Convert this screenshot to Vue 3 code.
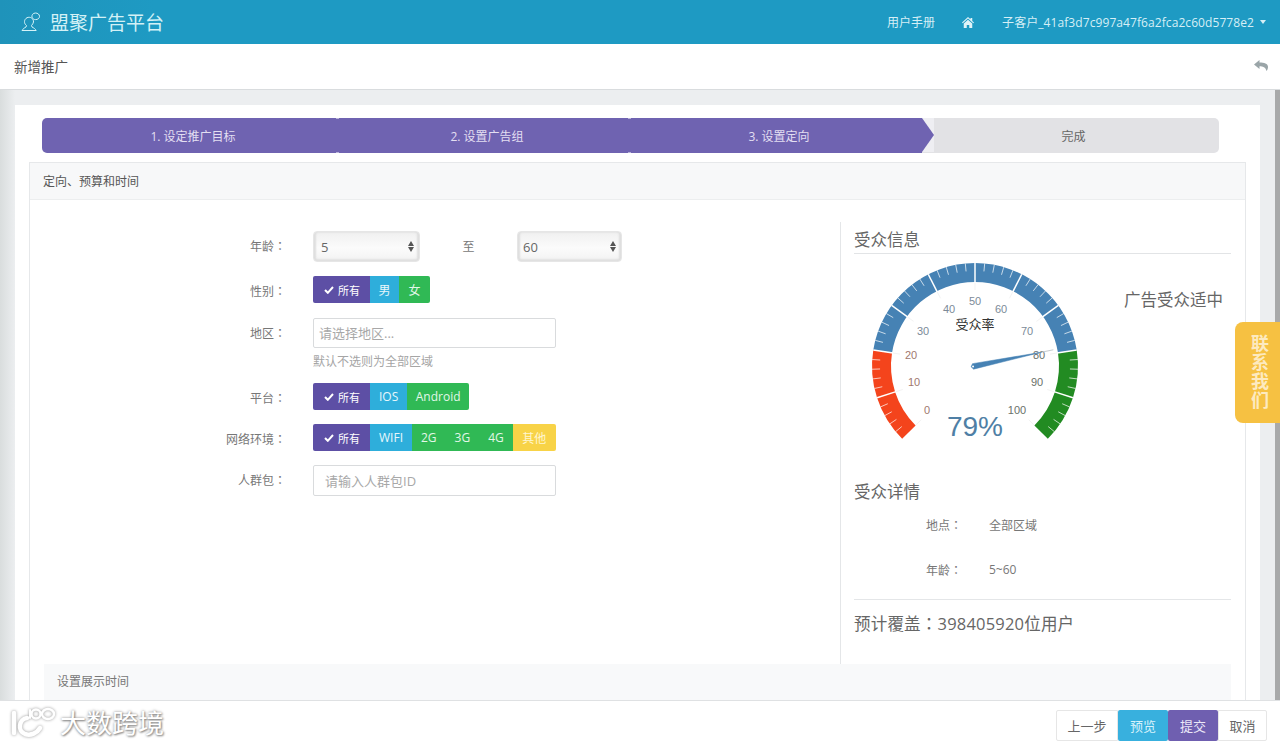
<template>
  <div class="page">
    <header class="topbar">
      <div class="brand">
        <svg class="brand-icon" width="20" height="20" viewBox="0 0 20 20" fill="none" stroke="#d5f3f8" stroke-width="1">
          <path d="M5.500 13.500A4.500 4.500 0 1 1 12.500 10Q12 12 10.500 13.500l.5 1.500c1.700.8 3.200 1.800 4.200 3.500H1c1-1.700 2.500-2.700 4-3.500z" />
          <path d="M11 5.500c-.6-2.400 1-4.500 3.500-4.500 2.300 0 4 1.500 4 3.300 0 2-1.700 3.300-3.900 3.300-.7 0-1.300-.1-1.800-.4z" />
        </svg>
        <span class="brand-name">盟聚广告平台</span>
      </div>
      <nav class="topnav">
        <a>用户手册</a>
        <svg class="home" width="12" height="11" viewBox="0 0 24 22" fill="#dff3f8">
          <path d="M12 0l5 4.600V2h3.500v5.800L24 11l-1.500 1.700L12 3.200 1.500 12.700 0 11z" />
          <path d="M12 5.500l8.500 7.700V22h-6v-6h-5v6h-6v-8.800z" />
        </svg>
        <a class="user">子客户_41af3d7c997a47f6a2fca2c60d5778e2<i class="caret"></i></a>
      </nav>
    </header>

    <div class="subbar">
      <span class="subbar-title">新增推广</span>
      <svg width="14" height="12" viewBox="0 0 28 24" fill="#9aa5a8">
        <path d="M11 0L0 9l11 9v-5.500c7 0 12 1.500 14 9.500 2.500-3 3-6 3-8.500C28 7 20 5 11 5z" />
      </svg>
    </div>

    <main class="main">
      <div class="content">
        <section class="card">
          <ol class="steps">
            <li v-for="s in steps" :key="s.text" class="step" :class="s.cls">{{ s.text }}</li>
          </ol>

          <div class="panel">
            <div class="panel-head">定向、预算和时间</div>
            <div class="panel-body">
              <div class="columns">
                <form class="form" @submit.prevent>
                  <div class="row">
                    <label>年龄<span class="colon">：</span></label>
                    <div class="select-wrap first">
                      <select><option>5</option></select>
                      <i class="updown"></i>
                    </div>
                    <span class="to">至</span>
                    <div class="select-wrap">
                      <select><option>60</option></select>
                      <i class="updown"></i>
                    </div>
                  </div>
                  <div class="row" v-for="g in groups" :key="g.label" :class="{ 'has-hint': g.hint }">
                    <label>{{ g.label }}<span class="colon">：</span></label>
                    <div v-if="g.items" class="btn-group">
                      <button class="opt all" type="button"><svg width="10" height="8" viewBox="0 0 10 8" fill="none" stroke="#fff" stroke-width="2"><path d="M1 4l2.800 2.800L9 1" /></svg>所有</button>
                      <button v-for="o in g.items" :key="o.t" class="opt" :class="o.c" type="button">{{ o.t }}</button>
                    </div>
                    <div v-else class="field">
                      <input :class="g.cls" :placeholder="g.placeholder" />
                      <p v-if="g.hint" class="hint">{{ g.hint }}</p>
                    </div>
                  </div>
                </form>

                <aside class="info">
                  <h3 class="info-title ruled">受众信息</h3>
                  <div class="gauge-row">
                    <svg class="gauge" width="270" height="210" viewBox="0 0 270 210">
                      <path v-for="b in bands" :key="b.color" :d="b.d" :fill="b.color" />
                      <line v-for="(t, i) in minorTicks" :key="'m' + i" v-bind="t" stroke="#fff" stroke-opacity=".7" stroke-width="1" />
                      <line v-for="(t, i) in majorTicks" :key="'j' + i" v-bind="t" stroke="#fff" stroke-width="1.500" />
                      <line v-for="(t, i) in innerTicks" :key="'n' + i" v-bind="t" stroke="#f3f3f3" stroke-width="1" />
                      <text v-for="l in labels" :key="l.t" :x="l.x" :y="l.y" :fill="l.c" class="g-label" text-anchor="middle">{{ l.t }}</text>
                      <text x="121" y="75" class="g-title" text-anchor="middle">受众率</text>
                      <line x1="121" y1="112" :x2="needle.x" :y2="needle.y" stroke="#c5ccd0" stroke-width="1" />
                      <polygon :points="needle.points" fill="#4682b4" stroke="#4682b4" stroke-width=".5" />
                      <circle :cx="needle.bx" :cy="needle.by" r="1" fill="#fff" />
                      <text x="121" y="182" class="g-value" text-anchor="middle">79%</text>
                    </svg>
                    <span class="verdict">广告受众适中</span>
                  </div>

                  <h3 class="info-title detail-title">受众详情</h3>
                  <div class="detail"><span class="detail-key">地点<span class="colon">：</span></span><span>全部区域</span></div>
                  <div class="detail"><span class="detail-key">年龄<span class="colon">：</span></span><span>5~60</span></div>
                  <p class="cover">预计覆盖<span class="colon">：</span>398405920位用户</p>
                </aside>
              </div>
              <div class="section-head">设置展示时间</div>
            </div>
          </div>
        </section>
      </div>
      <div class="scrollbar"></div>
    </main>

    <footer class="footer">
      <div class="actions">
        <button class="act" type="button">上一步</button>
        <button class="act blue" type="button">预览</button>
        <button class="act purple" type="button">提交</button>
        <button class="act" type="button">取消</button>
      </div>
    </footer>

    <div class="watermark">
      <svg width="48" height="34" viewBox="0 0 48 34" fill="none" stroke="#fff" stroke-width="4.500" stroke-linecap="round">
        <path d="M5 7v20" />
        <path d="M18 12c-8 1-10 13-2 16 6 2 12-1 15-6" />
        <path d="M21 4v8" stroke-width="2" />
        <circle cx="27" cy="8" r="4.500" stroke-width="2.500" />
        <ellipse cx="39" cy="8" rx="6" ry="5" stroke-width="2.500" />
      </svg>
      <span>大数跨境</span>
    </div>

    <a class="contact">联系我们</a>
  </div>
</template>

<script setup>
const steps = [
  { text: '1. 设定推广目标', cls: 's1' },
  { text: '2. 设置广告组', cls: 's2' },
  { text: '3. 设置定向', cls: 's3' },
  { text: '完成', cls: 's4' }
]

const groups = [
  { label: '性别', items: [{ t: '男', c: 'blue narrow' }, { t: '女', c: 'green wide' }] },
  { label: '地区', placeholder: '请选择地区...', hint: '默认不选则为全部区域', cls: 'area' },
  { label: '平台', items: [{ t: 'IOS', c: 'blue' }, { t: 'Android', c: 'green narrow' }] },
  {
    label: '网络环境',
    items: [
      { t: 'WIFI', c: 'blue' },
      { t: '2G', c: 'green' },
      { t: '3G', c: 'green' },
      { t: '4G', c: 'green' },
      { t: '其他', c: 'yellow' }
    ]
  },
  { label: '人群包', placeholder: '请输入人群包ID', cls: 'crowd' }
]

// gauge geometry, value 0..100 sweeps 270deg
const cx = 121
const cy = 112
const R = 103
const r = 84

function pt(value, radius) {
  const a = ((-135 + value * 2.7) * Math.PI) / 180
  return [+(cx + radius * Math.sin(a)).toFixed(2), +(cy - radius * Math.cos(a)).toFixed(2)]
}

function band(from, to, color) {
  const [x1, y1] = pt(from, R)
  const [x2, y2] = pt(to, R)
  const [x3, y3] = pt(to, r)
  const [x4, y4] = pt(from, r)
  return {
    color,
    d: `M${x1} ${y1}A${R} ${R} 0 ${to - from > 66 ? 1 : 0} 1 ${x2} ${y2}L${x3} ${y3}A${r} ${r} 0 ${to - from > 66 ? 1 : 0} 0 ${x4} ${y4}Z`
  }
}

function tick(value, a, b) {
  const [x1, y1] = pt(value, a)
  const [x2, y2] = pt(value, b)
  return { x1, y1, x2, y2 }
}

const bands = [band(0, 20, '#f4441c'), band(20, 80, '#4682b4'), band(80, 100, '#228b22')]

// label offsets from the gauge centre, read off the reference
const labelPos = {
  0: [-48, 44], 10: [-61, 16], 20: [-64, -11], 30: [-52, -35], 40: [-26, -57], 50: [0, -65],
  60: [26, -57], 70: [52, -35], 80: [64, -11], 90: [62, 16], 100: [42, 44]
}

const majorTicks = []
const innerTicks = []
const minorTicks = []
const labels = []
for (let v = 0; v <= 100; v += 2) {
  if (v % 10 === 0) {
    if (v > 0 && v < 100) majorTicks.push(tick(v, R, r - 1))
    innerTicks.push(tick(v, r - 1, r - 8))
    const [dx, dy] = labelPos[v]
    labels.push({ t: v, x: cx + dx, y: cy + dy + 4, c: v <= 20 ? '#a0786e' : v >= 80 ? '#6a716a' : '#7c8a98' })
  } else {
    minorTicks.push(tick(v, R, R - 8))
  }
}

const [nx, ny] = pt(79, 80)
const [bx, by] = pt(79, -2)
const side = 2.8
const nAngle = ((-135 + 79 * 2.7) * Math.PI) / 180
const ox = side * Math.cos(nAngle)
const oy = side * Math.sin(nAngle)
const needle = {
  x: nx,
  y: ny,
  bx,
  by,
  points: `${pt(79, -4).join(',')} ${(bx + ox).toFixed(2)},${(by + oy).toFixed(2)} ${pt(79, 68).join(',')} ${(bx - ox).toFixed(2)},${(by - oy).toFixed(2)}`
}
</script>

<style scoped>
.page {
  position: relative;
  display: flex;
  flex-direction: column;
  height: 746px;
  overflow: hidden;
  font-family: "Open Sans", "Noto Sans CJK SC", sans-serif;
  font-size: 12px;
  color: #777;
  background: #fff;
}

.colon {
  font-family: "Noto Sans CJK TC", sans-serif;
}

.topbar {
  flex: none;
  display: flex;
  align-items: center;
  justify-content: space-between;
  height: 44px;
  padding: 0 14px 0 21px;
  background: linear-gradient(90deg, #1f93ba, #1e9ac3 12%, #1e9ac3);
  box-sizing: border-box;
}

.brand {
  display: flex;
  align-items: center;
  gap: 9px;
}

.brand-name {
  font-size: 19px;
  color: #d3f1f6;
}

.topnav {
  display: flex;
  align-items: center;
  color: #d6eff6;
}

.home {
  margin: 0 28px 0 27px;
}

.user {
  display: flex;
  align-items: center;
  letter-spacing: .08px;
}

.caret {
  width: 0;
  height: 0;
  margin-left: 6px;
  border: 3.500px solid transparent;
  border-top: 4px solid #d6eff6;
  border-bottom: 0;
}

.subbar {
  flex: none;
  display: flex;
  align-items: center;
  justify-content: space-between;
  height: 46px;
  padding: 0 12px 2px 14px;
  background: #fff;
  border-bottom: 1px solid #d9dcde;
  box-sizing: border-box;
}

.subbar-title {
  font-size: 13.500px;
  color: #555;
}

.main {
  flex: 1;
  display: flex;
  min-height: 0;
  background: linear-gradient(90deg, #d9dddd, #eceef0 15px);
}

.content {
  flex: 1;
  min-width: 0;
  overflow: hidden;
  padding: 15px 15px 0 15px;
}

.scrollbar {
  flex: none;
  width: 5px;
  background: #a8a9aa;
}

.card {
  height: 700px;
  padding: 13px 14px 0;
  background: #fff;
  box-sizing: border-box;
}

.steps {
  display: flex;
  width: 1177px;
  height: 35px;
  margin: 0 0 9px 13px;
  padding: 0;
  list-style: none;
}

.step {
  position: relative;
  padding-left: 6px;
  line-height: 37px;
  text-align: center;
  color: #e3dff2;
  background: #6f63b1;
  box-sizing: border-box;
}

.s1::after,
.s2::after {
  content: "";
  position: absolute;
  top: 0;
  right: -1px;
  z-index: 1;
  width: 3px;
  height: 1px;
  background: #b9b3da;
  box-shadow: 0 34px #b9b3da;
}

.s1 {
  width: 296px;
  border-radius: 5px 0 0 5px;
}

.s2,
.s3 {
  width: 292px;
}

.s3::after {
  content: "";
  position: absolute;
  top: 0;
  left: 100%;
  z-index: 1;
  border-left: 12px solid #6f63b1;
  border-top: 17.500px solid #eeeef2;
  border-bottom: 17.500px solid #eeeef2;
}

.s4 {
  width: 297px;
  color: #666;
  background: #e2e2e5;
  border-radius: 0 5px 5px 0;
}

.panel {
  border: 1px solid #e6e8ea;
  background: #fff;
}

.panel-head {
  height: 36px;
  padding-left: 13px;
  line-height: 37px;
  color: #555;
  background: #f7f8f9;
  border-bottom: 1px solid #eceeef;
}

.panel-body {
  padding: 22px 14px 0;
}

.columns {
  display: flex;
  height: 442px;
}

.form {
  width: 797px;
  padding-top: 9px;
  box-sizing: border-box;
  border-right: 1px solid #e4e6e8;
}

.row {
  display: flex;
  margin-bottom: 14px;
  min-height: 27px;
}

.row.has-hint {
  margin-top: 15px;
  margin-bottom: 13px;
}

.row label {
  width: 242px;
  height: 27px;
  margin-right: 27px;
  flex: none;
  line-height: 30px;
  text-align: right;
  color: #777;
}

.select-wrap {
  position: relative;
  width: 105px;
  height: 31px;
}

.select-wrap.first {
  width: 107px;
}

.select-wrap select {
  width: 100%;
  height: 100%;
  padding: 0 5px;
  appearance: none;
  border: 1px solid #e6e6e6;
  border-radius: 4px;
  font: inherit;
  font-size: 13px;
  color: #666;
  background: linear-gradient(180deg, #f0f0f0, #fbfbfb 55%, #f3f3f3);
  box-shadow: inset 2px 0 2px #dedede, inset -2px 0 2px #dedede, inset 0 -2px 2px #e2e2e2;
}

.select-wrap.first select {
  padding-left: 7px;
}

.updown {
  position: absolute;
  top: 10px;
  right: 6px;
  width: 0;
  height: 0;
  border: 3px solid transparent;
  border-top: 0;
  border-bottom: 5px solid #555;
}

.updown::after {
  content: "";
  position: absolute;
  top: 6px;
  left: -3px;
  border: 3px solid transparent;
  border-bottom: 0;
  border-top: 5px solid #555;
}

.to {
  width: 97px;
  line-height: 31px;
  text-align: center;
  color: #777;
}

.btn-group {
  display: flex;
  height: 27px;
  border-radius: 2px;
  overflow: hidden;
}

.opt {
  display: flex;
  align-items: center;
  gap: 4px;
  padding: 0 9px;
  border: 0;
  font: inherit;
  color: #fff;
}

.opt.all {
  width: 57px;
  padding: 0 0 0 11px;
  font-size: 11px;
  background: #5d4fa5;
  box-sizing: border-box;
}

.opt.blue {
  padding: 0 9px;
  background: #2eaedb;
  color: #e8f7fb;
}

.opt.blue.narrow {
  padding: 0 8.500px;
}

.opt.green {
  background: #30b955;
  color: #e2f7e8;
}

.opt.green.wide {
  padding: 0 9.500px;
}

.opt.green.narrow {
  padding: 0 8.500px;
}

.opt.yellow {
  padding: 0 9.500px;
  background: #f8d347;
  color: #fff6d0;
}

.field input {
  display: block;
  width: 243px;
  height: 31px;
  padding: 0 5px;
  border: 1px solid #d9dbdd;
  border-radius: 2px;
  box-sizing: border-box;
  font: inherit;
  font-size: 13px;
  outline: none;
}

.field input.area {
  height: 30px;
}

.field input.crowd {
  padding-left: 11px;
}

.field input::placeholder {
  color: #a8a8a8;
}

.hint {
  margin: 5px 0 0;
  line-height: 17px;
  color: #a5a5a5;
}

.info {
  flex: 1;
  min-width: 0;
  padding-left: 13px;
}

.info-title {
  margin: 0;
  font-size: 16.500px;
  font-weight: 400;
  line-height: 22px;
  color: #666;
}

.ruled {
  margin-top: 7px;
  padding-bottom: 2px;
  border-bottom: 1px solid #e2e4e6;
}

.gauge-row {
  display: flex;
  height: 210px;
}

.gauge {
  flex: none;
}

.g-label {
  font-family: "Liberation Sans", sans-serif;
  font-size: 11px;
}

.g-title {
  font-family: "Noto Sans CJK SC", sans-serif;
  font-size: 13px;
  fill: #333;
}

.g-value {
  font-family: "Liberation Sans", sans-serif;
  font-size: 28px;
  fill: #4f7fa5;
}

.verdict {
  padding-top: 35px;
  font-size: 16.500px;
  line-height: 22px;
  color: #666;
}

.detail-title {
  margin-top: 17px;
  margin-bottom: -1px;
}

.detail {
  display: flex;
  height: 45px;
  align-items: center;
  padding-left: 72px;
  color: #777;
}

.detail-key {
  width: 63px;
}

.cover {
  margin: 7px 0 0;
  padding-top: 12px;
  border-top: 1px solid #e4e6e8;
  font-size: 16.500px;
  line-height: 22px;
  letter-spacing: .2px;
  color: #666;
}

.section-head {
  height: 36px;
  padding-left: 13px;
  line-height: 36px;
  color: #777;
  background: #f8f9fa;
}

.footer {
  flex: none;
  display: flex;
  justify-content: flex-end;
  height: 46px;
  padding: 9px 13px 0 0;
  background: #fff;
  border-top: 1px solid #dfe1e3;
  box-sizing: border-box;
}

.actions {
  display: flex;
  height: 31px;
}

.act {
  width: 50px;
  padding: 0;
  border: 1px solid #e6e6e6;
  background: #fff;
  font: inherit;
  font-size: 13px;
  color: #666;
}

.act:first-child {
  width: 62px;
  border-radius: 2px 0 0 2px;
}

.act:last-child {
  width: 49px;
  border-radius: 0 2px 2px 0;
}

.act.blue {
  border: 0;
  border-radius: 2px;
  background: #38b0de;
  color: #d6f2fb;
}

.act.purple {
  border: 0;
  border-radius: 2px;
  background: #6f5fb0;
  color: #ece8f8;
}

.watermark {
  position: absolute;
  left: 9px;
  top: 706px;
  display: flex;
  align-items: center;
  gap: 3px;
  font-size: 26px;
  line-height: 34px;
  color: #fff;
  text-shadow: 0 0 3px #8a8a8a, 1px 1px 2px #8a8a8a;
}

.watermark svg {
  filter: drop-shadow(0 0 1.500px #999);
}

.contact {
  position: absolute;
  top: 322px;
  right: 0;
  display: flex;
  align-items: center;
  width: 45px;
  height: 101px;
  padding: 12px 0 0 3px;
  box-sizing: border-box;
  border-radius: 8px 0 0 8px;
  writing-mode: vertical-rl;
  font-size: 18px;
  font-weight: 700;
  letter-spacing: 1px;
  line-height: 18px;
  color: #fdeac0;
  background: #f6c142;
}
</style>

<style>
html, body {
  margin: 0;
  overflow: hidden;
}
</style>
